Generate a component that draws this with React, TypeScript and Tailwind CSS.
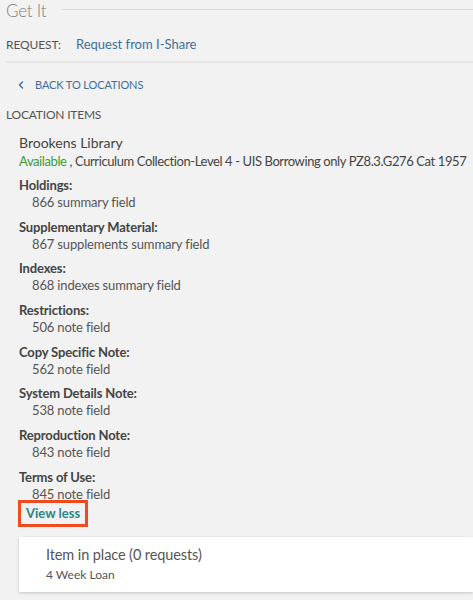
import React from 'react';
import { ChevronLeft } from 'lucide-react';

const FIELDS: { label: string; value: string }[] = [
  { label: 'Holdings:', value: '866 summary field' },
  { label: 'Supplementary Material:', value: '867 supplements summary field' },
  { label: 'Indexes:', value: '868 indexes summary field' },
  { label: 'Restrictions:', value: '506 note field' },
  { label: 'Copy Specific Note:', value: '562 note field' },
  { label: 'System Details Note:', value: '538 note field' },
  { label: 'Reproduction Note:', value: '843 note field' },
  { label: 'Terms of Use:', value: '845 note field' },
];

const App: React.FC = () => {
  return (
    <div className="w-[473px] h-[600px] overflow-hidden bg-[#f2f2f2] text-[#444] font-['Lato','Liberation_Sans',sans-serif]">
      {/* Header */}
      <div className="flex items-start gap-[16px] pl-[6px] h-[24px]">
        <span className="pt-[1px] text-[17px] font-light text-[#7c7c7c] leading-[20px] tracking-[-0.2px]">Get It</span>
        <div className="flex-1 h-px bg-[#dcdcdc] mt-[9px]" />
      </div>

      {/* Request row */}
      <div className="flex items-center pl-[6px] h-[37px] pt-[4px]">
        <span className="text-[12px] text-[#555] w-[70px] tracking-[-0.1px]">REQUEST:</span>
        <span className="text-[13px] text-[#3f6f9a]">Request from I-Share</span>
      </div>
      <div className="ml-[6px] h-[2px] bg-[#e6e6e6]" />

      {/* Back link */}
      <div className="flex items-center gap-[8px] pl-[15px] h-[43px] pt-[1px] text-[11px] text-[#3f6f9a] tracking-[-0.1px]">
        <ChevronLeft size={12} strokeWidth={3} />
        <span>BACK TO LOCATIONS</span>
      </div>

      <div className="pl-[6px] text-[12px] text-[#555] leading-[17px] tracking-[-0.2px]">LOCATION ITEMS</div>

      {/* Location */}
      <div className="pl-[19px] pt-[11px]">
        <div className="text-[14px] text-[#444] leading-[18px]">Brookens Library</div>
        <div className="text-[13px] leading-[18px] whitespace-nowrap tracking-[-0.4px]">
          <span className="text-[#3a9a3a]">Available</span>
          <span className="text-[#444]"> , Curriculum Collection-Level 4 - UIS Borrowing only PZ8.3.G276 Cat 1957</span>
        </div>

        <div className="flex flex-col gap-[7.7px] pt-[7px]">
          {FIELDS.map(f => (
            <div key={f.label} className="text-[13px] leading-[17px] tracking-[-0.15px]">
              <div className="font-bold text-[#444]">{f.label}</div>
              <div className="pl-[13px] text-[#555]">{f.value}</div>
            </div>
          ))}
        </div>

        <div className="-mt-[3px] w-fit -ml-[1px] border-[3px] border-[#f04a1f] px-[5px] py-[2px]">
          <span className="block text-[13px] font-bold text-[#2a8585] leading-[17px]">View less</span>
        </div>

        {/* Item card */}
        <div className="mt-[10px] bg-white shadow-[0_1px_3px_rgba(0,0,0,0.2)] pl-[27px] pt-[9px] pb-[9px]">
          <div className="text-[14.5px] text-[#555] leading-[18px] tracking-[-0.1px]">Item in place (0 requests)</div>
          <div className="text-[12px] text-[#555] leading-[16px] mt-[3px]">4 Week Loan</div>
        </div>
      </div>
    </div>
  );
};

export default App;
